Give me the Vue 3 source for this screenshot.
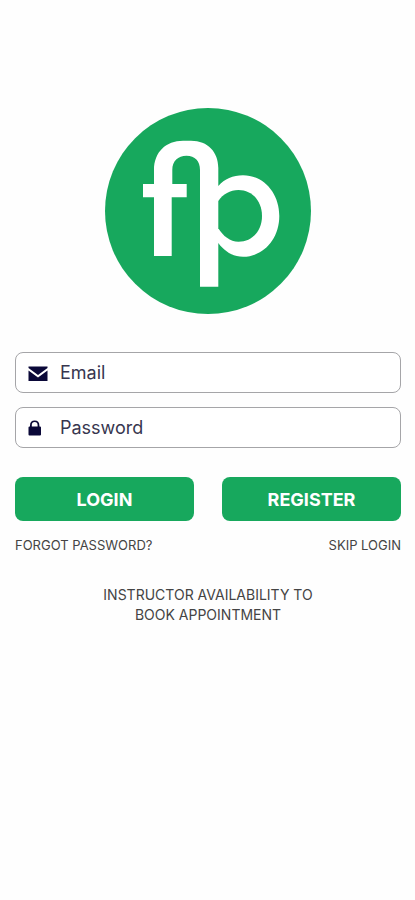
<script setup>
import { ref } from 'vue';

const email = ref('');
const password = ref('');
</script>

<template>
  <main class="login-page">
    <svg class="logo" viewBox="0 0 206 206" role="img" aria-label="fp">
      <circle cx="103" cy="103" r="103" class="logo-bg" />
      <path
        class="logo-mark"
        d="M49 148V89.3H38V76H49V62C49 44 61 32.7 78 32.7H86C103 32.7 113.3 44 113.3 60V78C119.5 71 128 67.3 138 67.3C158.5 67.3 174.3 85 174.3 108C174.3 131 158.5 148.7 138 148.7C128 148.7 119.5 143.5 113.3 135V178.7H95V62C95 53 90 47.7 81.5 47.7C73 47.7 67.3 53 67.3 62V76H81.7V89.3H66.7V148Z"
      />
      <path
        class="logo-bg"
        d="M113.3 93C118 86 125 82 133.5 82C147 82 157 93 157 108C157 123 147 133.7 133.5 133.7C125 133.7 118 128 113.3 120.3Z"
      />
    </svg>

    <form class="login-form" @submit.prevent>
      <div class="field">
        <label for="email" aria-label="Email">
          <svg class="icon" viewBox="0 0 20 16">
            <path d="M0.5 1.5H19.5V3L10 10L0.5 3ZM0.5 5.5L10 12.5L19.5 5.5V16H0.5Z" />
          </svg>
        </label>
        <input id="email" v-model="email" type="email" placeholder="Email" />
      </div>
      <div class="field">
        <label for="password" aria-label="Password">
          <svg class="icon" viewBox="0 0 20 16">
            <path d="M0.5 7.5Q0.5 6.5 1.5 6.5H2V5.5C2 2.2 3.7 0.5 6.7 0.5S11.4 2.2 11.4 5.5V6.5H12Q13 6.5 13 7.5V14.5Q13 15.5 12 15.5H1.5Q0.5 15.5 0.5 14.5ZM3.8 6.5H9.6V5C9.6 3.2 8.6 2 6.7 2S3.8 3.2 3.8 5Z" />
          </svg>
        </label>
        <input id="password" v-model="password" type="password" placeholder="Password" />
      </div>

      <div class="actions">
        <button type="submit">LOGIN</button>
        <button type="button">REGISTER</button>
      </div>
    </form>

    <nav class="links">
      <a href="#">FORGOT PASSWORD?</a>
      <a href="#">SKIP LOGIN</a>
    </nav>

    <a href="#" class="booking">INSTRUCTOR AVAILABILITY TO<br />BOOK APPOINTMENT</a>
  </main>
</template>

<style>
body {
  margin: 0;
  background: #fefefe;
}
</style>

<style scoped>
.login-page {
  --primary: #17a85d;
  --ink: #0a0838;

  display: flex;
  flex-direction: column;
  padding: 108px 14px 40px 15px;
  font-family: 'Inter', sans-serif;
}

.logo {
  width: 50%;
  min-width: 206px;
  max-width: 206px;
  align-self: center;
}
.logo-bg { fill: var(--primary); }
.logo-mark { fill: #fff; }

.login-form {
  display: flex;
  flex-direction: column;
  gap: 14px;
  margin-top: 38px;
}

.field {
  display: flex; align-items: center; gap: 12px;
  height: 41px;
  padding: 0 12px;
  box-sizing: border-box;
  background: #fff;
  border: 1px solid #a5a5a8;
  border-radius: 8px;
}

.field label { display: flex; }

.icon {
  width: 20px; height: 16px;
  fill: var(--ink);
}

.field input {
  flex: 1;
  min-width: 0;
  padding: 0;
  border: 0;
  outline: 0;
  background: transparent;
  font: inherit;
  font-size: 18px;
  color: var(--ink);
}
.field input::placeholder { color: #37364f; opacity: 1; }

.actions {
  display: grid;
  grid-template-columns: 1fr 1fr;
  gap: 28px;
  margin-top: 15px;
}

.actions button {
  height: 44px;
  border: 0;
  border-radius: 8px;
  background: var(--primary);
  color: #fff;
  font: inherit;
  font-size: 18px;
  font-weight: 700;
  cursor: pointer;
}

.links {
  display: flex; justify-content: space-between;
  margin-top: 14px;
  font-size: 13px;
  line-height: 20px;
}

a { color: #444; text-decoration: none; }

.booking {
  align-self: center;
  margin-top: 30px;
  font-size: 14px;
  line-height: 20px;
  text-align: center;
}
</style>
